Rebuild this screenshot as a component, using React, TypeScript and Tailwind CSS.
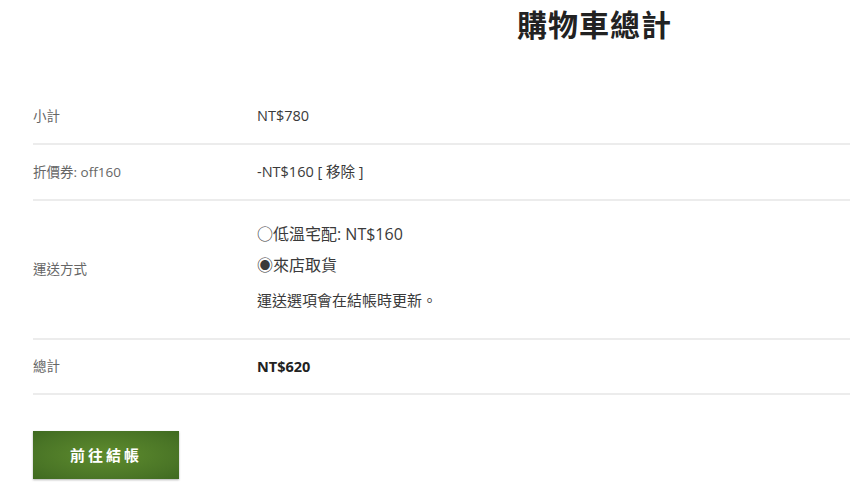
const font = { fontFamily: '"Open Sans", "Noto Sans CJK TC", sans-serif' };

const Row = ({
  label,
  children,
  className = "",
}: {
  label: string;
  children: React.ReactNode;
  className?: string;
}) => (
  <div className={`grid grid-cols-[224px_1fr] items-center border-b-2 border-[#ececec] ${className}`}>
    <div className="text-[13.5px] text-[#666]">{label}</div>
    <div className="text-[14.5px] text-[#3a3a3a]">{children}</div>
  </div>
);

export default function App() {
  return (
    <div className="min-h-screen bg-white pl-[33px]" style={font}>
      <h2 className="pl-[484px] pt-[5px] text-[30px] font-bold leading-[40px] tracking-[1px] text-[#222]">
        購物車總計
      </h2>
      <div className="mt-[44px]">
        <Row label="小計" className="h-[56px]">NT$780</Row>
        <Row label="折價券: off160" className="h-[56px]">
          -NT$160 [ 移除 ]
        </Row>
        <Row label="運送方式" className="h-[139px]">
          <div className="-mt-[6px] flex flex-col text-[16px] leading-[22px]">
            <span>○低溫宅配: NT$160</span>
            <span className="mt-[9px]">◉來店取貨</span>
            <span className="mt-[13px] text-[15px]">運送選項會在結帳時更新。</span>
          </div>
        </Row>
        <Row label="總計" className="h-[55px]">
          <span className="font-bold text-[#222]">NT$620</span>
        </Row>
      </div>
      <button className="mt-[36px] h-[48px] w-[146px] bg-[radial-gradient(ellipse_at_center,#5e8c2e_0%,#4a7526_70%,#3f6a20_100%)] text-[15px] font-bold tracking-[3px] text-white shadow-[0_1px_2px_rgba(0,0,0,0.3)]">
        前往結帳
      </button>
    </div>
  );
}
